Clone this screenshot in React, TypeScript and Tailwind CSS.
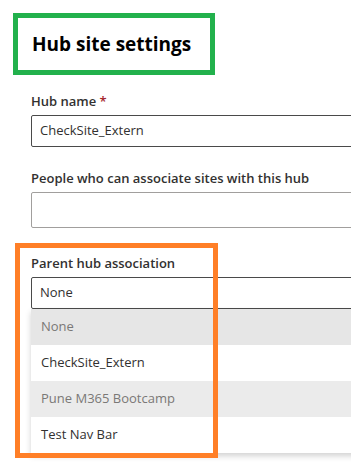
import React from "react";

const options = [
  { label: "None", muted: true, bg: "bg-[#e6e6e6]" },
  { label: "CheckSite_Extern", muted: false, bg: "bg-white" },
  { label: "Pune M365 Bootcamp", muted: true, bg: "bg-[#ebebeb]" },
  { label: "Test Nav Bar", muted: false, bg: "bg-white" },
];

function App() {
  return (
    <div
      className="relative w-[351px] h-[476px] overflow-hidden bg-white text-[#323130]"
      style={{ fontFamily: '"Open Sans", "Segoe UI", sans-serif' }}
    >
      {/* heading, boxed in green */}
      <div className="ml-[13px] mt-[13px] w-[202px] h-[62px] border-[5px] border-[#22b14c] flex items-center pl-[14px]">
        <h1 className="text-[19px] font-bold leading-none text-black">Hub site settings</h1>
      </div>

      <div className="pl-[31px]">
        <div className="mt-[16px] h-[20px] text-[13px] font-semibold leading-[20px]">
          Hub name <span className="text-[#a4262c]">*</span>
        </div>
        <div className="mt-[4px] w-[400px] h-[32px] border border-[#4a4a4a] rounded-[2px] flex items-center pl-[8px] text-[13px]">
          CheckSite_Extern
        </div>

        <div className="mt-[21px] h-[20px] text-[13px] font-semibold leading-[20px]">
          People who can associate sites with this hub
        </div>
        <div className="mt-[4px] w-[400px] h-[36px] border border-[#a19f9d] rounded-[2px]" />

        <div className="mt-[25px] h-[20px] text-[13px] font-semibold leading-[20px]">
          Parent hub association
        </div>
        <div className="mt-[4px] w-[400px] h-[32px] border border-[#4a4a4a] rounded-[2px] flex items-center pl-[8px] text-[13px]">
          None
        </div>
        <div className="w-[400px] shadow-[0_3px_6px_rgba(0,0,0,0.18)]">
          {options.map((o) => (
            <div
              key={o.label}
              className={`${o.bg} h-[36px] flex items-center pl-[10px] text-[13px] ${o.muted ? "text-[#7a7876]" : "text-[#323130]"}`}
            >
              {o.label}
            </div>
          ))}
        </div>
      </div>

      {/* orange annotation frame over the dropdown */}
      <div className="absolute left-[15px] top-[243px] w-[203px] h-[215px] border-[5px] border-[#ff7f27] pointer-events-none" />
    </div>
  );
}

export default App;
